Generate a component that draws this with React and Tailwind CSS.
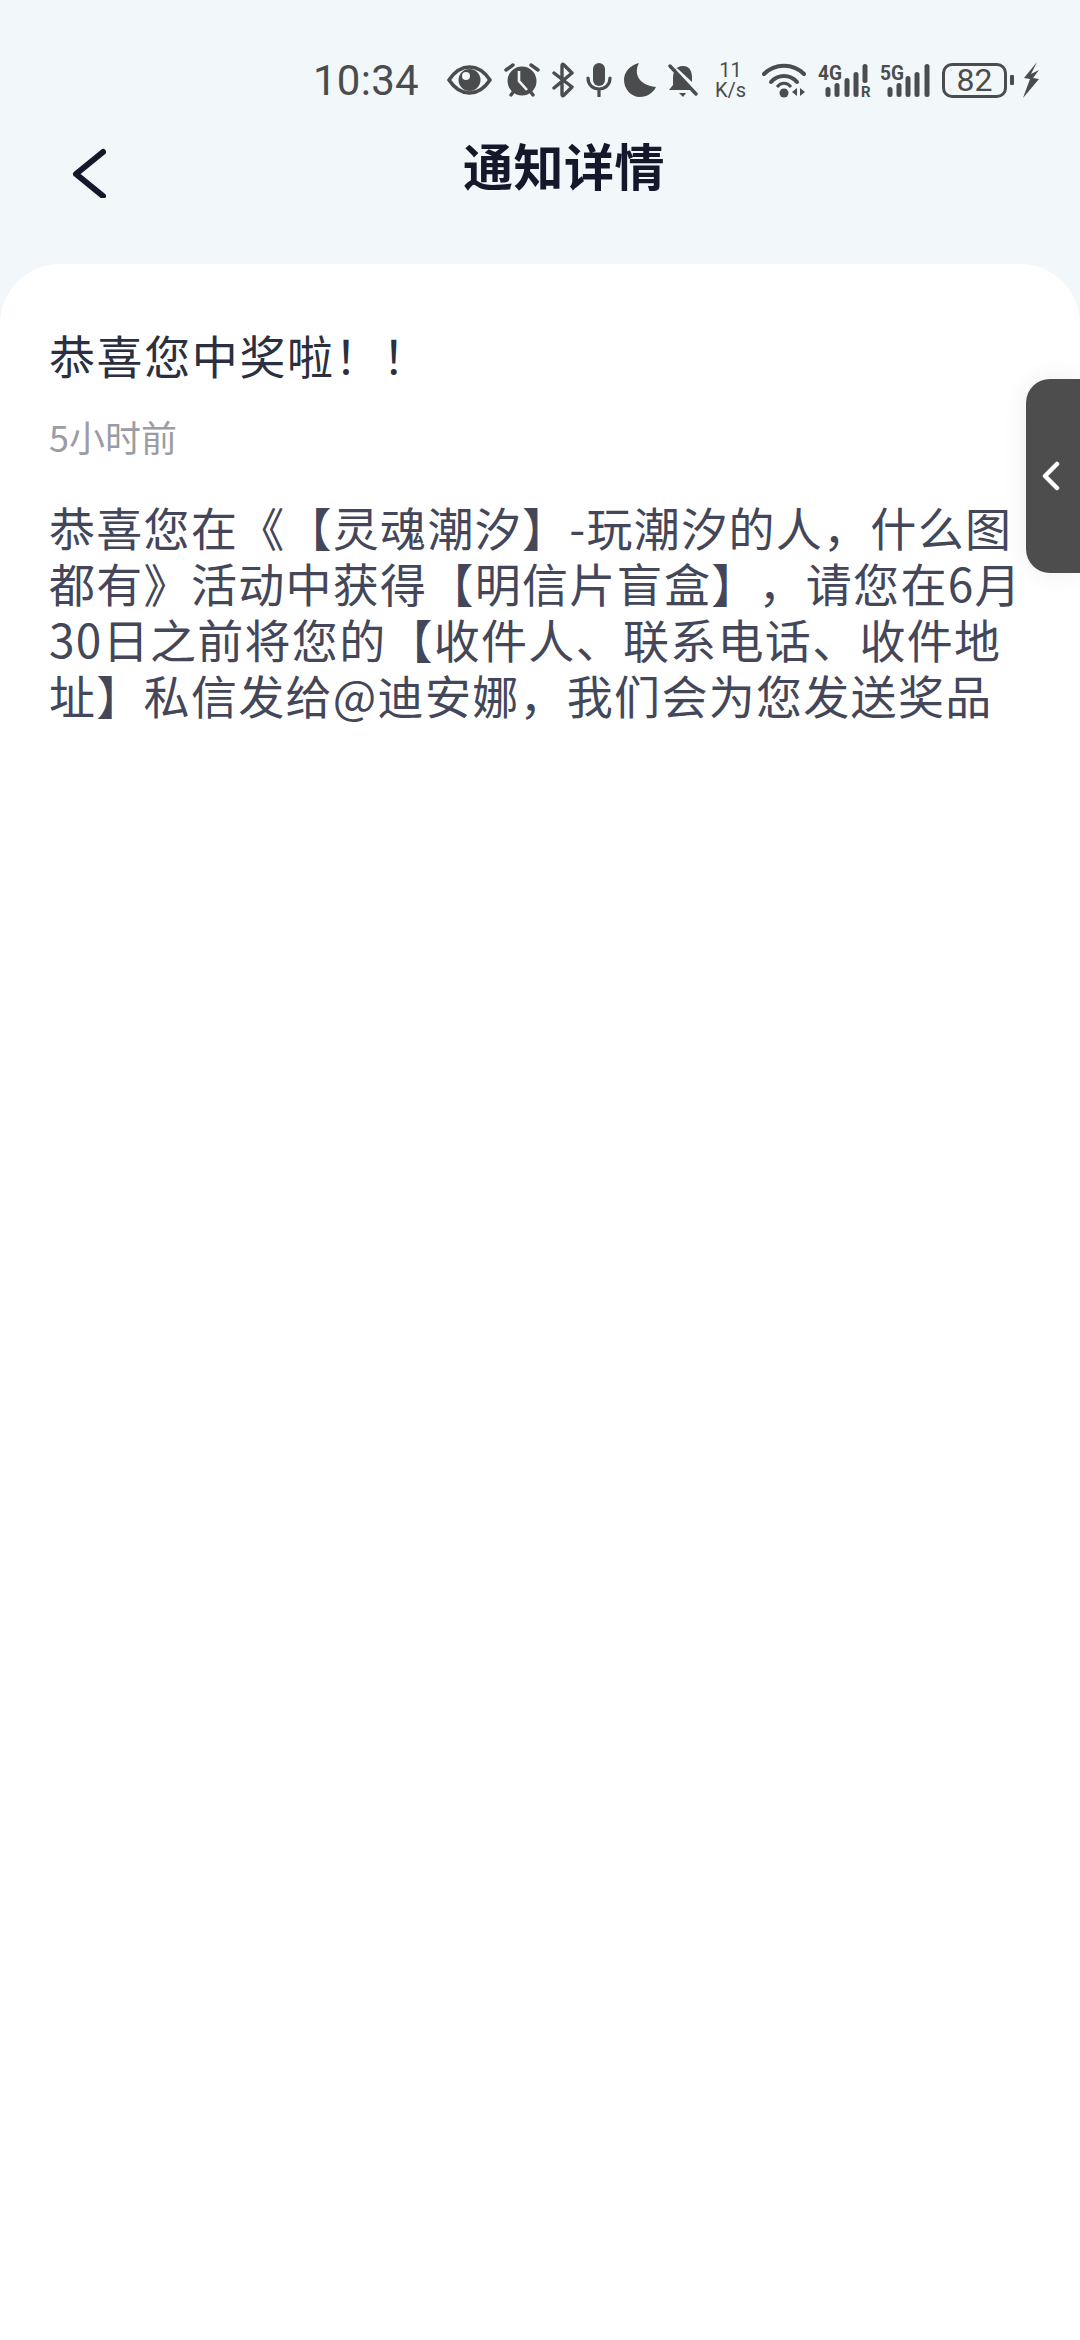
const fontStack = { fontFamily: '"Noto Sans CJK SC", "Noto Sans", sans-serif' };

const TITLE = "恭喜您中奖啦\uFF01\uFF01";
const BODY =
  "恭喜您在《【灵魂潮汐】-玩潮汐的人\uFF0C什么图都有》活动中获得【明信片盲盒】\uFF0C请您在6月30日之前将您的【收件人、联系电话、收件地址】私信发给@迪安娜\uFF0C我们会为您发送奖品";

function Eye() {
  return (
    <svg width="45" height="30" viewBox="0 0 45 30" className="ml-[28px] shrink-0">
      <path d="M2 15C8 6 15 2 22.5 2S37 6 43 15C37 24 30 28 22.5 28S8 24 2 15Z" fill="none" stroke="#4a4c4e" strokeWidth="3.6" strokeLinejoin="round" />
      <circle cx="22.5" cy="15" r="11" fill="#4a4c4e" />
      <circle cx="19" cy="11" r="4" fill="#f2f7fa" />
    </svg>
  );
}

function Alarm() {
  return (
    <svg width="36" height="34" viewBox="0 0 36 34" className="ml-3 shrink-0">
      <circle cx="18" cy="18" r="14.5" fill="#4a4c4e" />
      <path d="M15 8V18L23 27" fill="none" stroke="#f2f7fa" strokeWidth="2.6" />
      <path d="M2 7L9 2M34 7L27 2M7 32L10 28M29 32L26 28" fill="none" stroke="#4a4c4e" strokeWidth="3.4" strokeLinecap="round" />
    </svg>
  );
}

function Bluetooth() {
  return (
    <svg width="22" height="36" viewBox="0 0 22 36" className="ml-3 shrink-0">
      <path d="M2 11L20 25L12 33Q10 35 10 32V4Q10 1 12 3L20 11L2 26" fill="none" stroke="#4a4c4e" strokeWidth="3.4" strokeLinecap="round" strokeLinejoin="round" />
    </svg>
  );
}

function Mic() {
  return (
    <svg width="26" height="34" viewBox="0 0 26 34" className="ml-3 shrink-0">
      <rect x="7" y="0" width="12" height="23" rx="6" fill="#4a4c4e" />
      <path d="M2 15C2 22 7 26 13 26S24 22 24 15M13 26V33" fill="none" stroke="#4a4c4e" strokeWidth="3.2" strokeLinecap="round" />
    </svg>
  );
}

function Moon() {
  return (
    <svg width="32" height="34" viewBox="0 0 32 34" className="ml-3 shrink-0">
      <path d="M15 0C10 9 13 22 32 24C29 30 23 34 16 34C7 34 0 26 0 17C0 9 6 2 15 0Z" fill="#4a4c4e" />
    </svg>
  );
}

function BellOff() {
  return (
    <svg width="30" height="33" viewBox="0 0 30 33" className="ml-3 shrink-0">
      <path d="M15 2C8 2 5 8 5 14V21L1 26H25L5 6Z" fill="#4a4c4e" />
      <path d="M9 4C11 3 13 2 15 2C22 2 24 8 24 14V18Z" fill="#4a4c4e" />
      <path d="M2 2L28 30" stroke="#4a4c4e" strokeWidth="3.4" strokeLinecap="round" />
      <path d="M11 29H18L15 33Z" fill="#4a4c4e" />
    </svg>
  );
}

function Wifi() {
  return (
    <svg width="44" height="36" viewBox="0 0 44 36" className="ml-[14px] shrink-0">
      <path d="M2 12C13 1 31 1 42 12" fill="none" stroke="#4a4c4e" strokeWidth="4" strokeLinecap="round" />
      <path d="M9 20C16 12 28 12 35 20" fill="none" stroke="#4a4c4e" strokeWidth="4" strokeLinecap="round" />
      <path d="M15 25C19 20 25 20 29 25" fill="none" stroke="#4a4c4e" strokeWidth="3" />
      <circle cx="22" cy="31" r="4.5" fill="#4a4c4e" />
      <path d="M35 26V34L30 30ZM38 26V34L43 30Z" fill="#4a4c4e" />
    </svg>
  );
}

function Signal({ label, tops, xs, roaming, width, className }) {
  return (
    <svg width={width} height="42" viewBox={`0 -3 ${width} 42`} className={className}>
      <text x="0" y="18" fontFamily="Roboto, sans-serif" fontWeight="700" fontSize="21" textLength="24" lengthAdjust="spacingAndGlyphs" fill="#4a4c4e">{label}</text>
      {xs.map((x, i) => (
        <rect key={x} x={x - 2.5} y={tops[i]} width="5" height={(roaming && i === 4 ? 21 : 35) - tops[i]} rx="2.5" fill="#4a4c4e" />
      ))}
      {roaming && <text x="43" y="35" fontFamily="Roboto, sans-serif" fontWeight="700" fontSize="15" fill="#4a4c4e">R</text>}
    </svg>
  );
}

function Bolt() {
  return (
    <svg width="18" height="36" viewBox="0 0 18 36" className="ml-2 shrink-0">
      <path d="M15 0L2 16L8 17L1 36L17 17L11 16L17 8L9 12Z" fill="#4a4c4e" />
    </svg>
  );
}

function StatusBar() {
  return (
    <div className="mt-[62px] flex h-[36px] items-center justify-end pr-[40px] text-[#4a4c4e]" style={{ fontFamily: 'Roboto, sans-serif' }}>
      <span className="mt-[2px] text-[42px] leading-none tracking-[0.3px]">10:34</span>
      <Eye />
      <Alarm />
      <Bluetooth />
      <Mic />
      <Moon />
      <BellOff />
      <div className="ml-[15px] flex w-[35px] flex-col items-center text-[20px] leading-[20px]">
        <span>11</span>
        <span>K/s</span>
      </div>
      <Wifi />
      <Signal label="4G" width={54} xs={[10, 19, 29, 38, 47]} tops={[25, 21, 16, 10, 2]} roaming className="ml-3 shrink-0" />
      <Signal label="5G" width={52} xs={[10, 19, 28, 37, 47]} tops={[25, 21, 14, 10, 2]} className="ml-2 shrink-0" />
      <div className="ml-[10px] flex h-[35px] w-[65px] items-center justify-center rounded-[10px] border-[3px] border-[#4a4c4e] text-[32px] leading-none">
        82
      </div>
      <div className="ml-[3px] h-[10px] w-[4px] rounded-[1px] bg-[#4a4c4e]" />
      <Bolt />
    </div>
  );
}

function Header() {
  return (
    <div className="mt-[50px] flex h-[50px] items-start pl-[72px]">
      <svg width="34" height="50" viewBox="0 0 34 50" className="shrink-0">
        <path d="M31 4L4 26L31 48" fill="none" stroke="#15172b" strokeWidth="6" strokeLinecap="round" strokeLinejoin="round" />
      </svg>
      <h1 className="-mt-[3px] ml-[357px] text-[50px] font-bold leading-[38px] tracking-[0.5px] text-[#15172b]">通知详情</h1>
    </div>
  );
}

export default function App() {
  return (
    <div className="relative flex min-h-[2340px] flex-col overflow-hidden bg-[#f2f7fa]" style={fontStack}>
      <StatusBar />
      <Header />
      <main className="mt-[66px] flex-1 rounded-t-[60px] bg-white px-[49px] pt-[60px] [text-spacing-trim:space-all]">
        <h2 className="text-[46px] font-normal leading-[60px] tracking-[1.6px] text-[#2c2f3f]">{TITLE}</h2>
        <p className="mt-[30px] text-[36px] leading-[44px] text-[#9b9ca4]">5小时前</p>
        <p className="mt-[40px] text-[46px] leading-[56px] tracking-[1.3px] text-[#44475a]">{BODY}</p>
      </main>
      <button className="absolute right-0 top-[379px] flex h-[194px] w-[54px] items-center rounded-l-[24px] bg-[#4d4d4d] pl-[16px] shadow-[0_0_24px_rgba(0,0,0,0.08)]">
        <svg width="18" height="30" viewBox="0 0 18 30">
          <path d="M15 3L3 15L15 27" fill="none" stroke="#ffffff" strokeWidth="4.5" strokeLinecap="round" strokeLinejoin="round" />
        </svg>
      </button>
    </div>
  );
}
